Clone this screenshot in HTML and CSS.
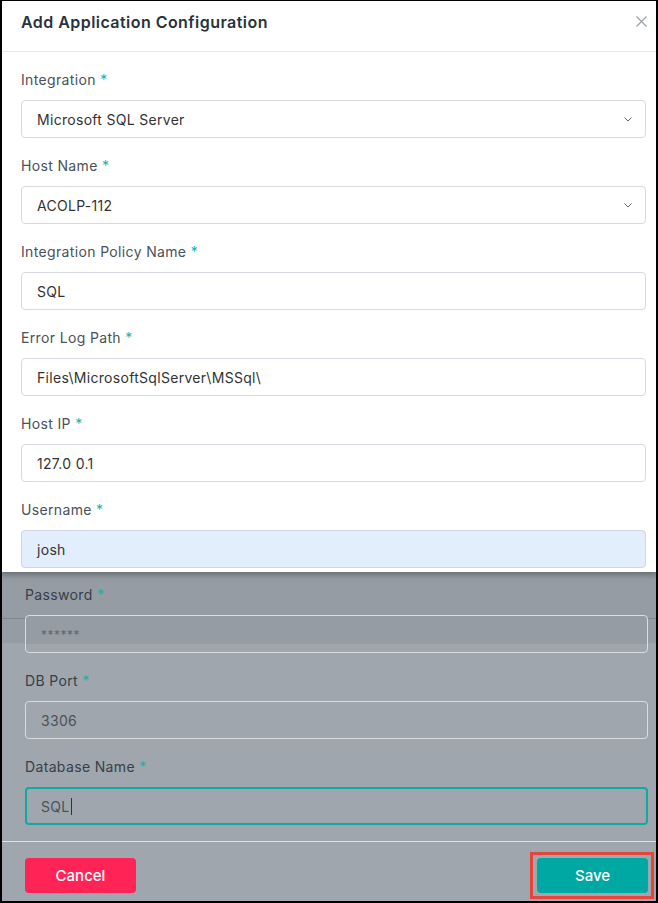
FILE: index.html
```html
<!DOCTYPE html>
<html lang="en">
<head>
  <meta charset="UTF-8">
  <meta name="viewport" content="width=device-width, initial-scale=1">
  <title>Add Application Configuration</title>
  <link rel="stylesheet" href="styles.css">
</head>
<body>

  <div class="frame">

    <section class="modal">
      <header class="modal-head">
        <h2>Add Application Configuration</h2>
        <button class="close" aria-label="Close">
          <svg width="11" height="11" viewBox="0 0 11 11"><path d="M0.5 0.5 L10.5 10.5 M10.5 0.5 L0.5 10.5" stroke="#9aa0a8" stroke-width="1.2" fill="none"/></svg>
        </button>
      </header>

      <div class="modal-body">
        <div class="field">
          <label>Integration <span class="req">*</span></label>
          <div class="control">
            <span>Microsoft SQL Server</span>
            <svg class="chev" width="8" height="5" viewBox="0 0 8 5"><path d="M0.5 0.5 L4 4 L7.5 0.5" stroke="#666" stroke-width="1" fill="none"/></svg>
          </div>
        </div>

        <div class="field">
          <label>Host Name <span class="req">*</span></label>
          <div class="control">
            <span>ACOLP-112</span>
            <svg class="chev" width="8" height="5" viewBox="0 0 8 5"><path d="M0.5 0.5 L4 4 L7.5 0.5" stroke="#666" stroke-width="1" fill="none"/></svg>
          </div>
        </div>

        <div class="field">
          <label>Integration Policy Name <span class="req">*</span></label>
          <div class="control"><span>SQL</span></div>
        </div>

        <div class="field">
          <label>Error Log Path <span class="req">*</span></label>
          <div class="control"><span>Files\MicrosoftSqlServer\MSSql\</span></div>
        </div>

        <div class="field">
          <label>Host IP <span class="req">*</span></label>
          <div class="control"><span>127.0 0.1</span></div>
        </div>

        <div class="field">
          <label>Username <span class="req">*</span></label>
          <div class="control autofill"><span>josh</span></div>
        </div>
      </div>
    </section>

    <section class="backdrop">
      <div class="backdrop-body">
        <div class="field">
          <label>Password <span class="req">*</span></label>
          <div class="control secret"><span>******</span></div>
        </div>

        <div class="field">
          <label>DB Port <span class="req">*</span></label>
          <div class="control"><span>3306</span></div>
        </div>

        <div class="field">
          <label>Database Name <span class="req">*</span></label>
          <div class="control focused"><span>SQL</span><i class="caret"></i></div>
        </div>
      </div>

      <footer class="foot">
        <button class="btn btn-cancel">Cancel</button>
        <span class="mark">
          <button class="btn btn-save">Save</button>
        </span>
      </footer>
    </section>

  </div>

</body>
</html>
```

FILE: styles.css
```css
body {
  margin: 0;
  font-family: Inter, "Noto Sans", sans-serif;
  background: #000;
}

.frame {
  width: 658px;
  height: 903px;
  box-sizing: border-box;
  border: 2px solid #000;
  border-top-width: 1px;
  display: flex;
  flex-direction: column;
  background: #9fa6ad;
}

/* white part of the dialog */
.modal {
  background: #fff;
  box-shadow: 0 2px 6px rgba(0, 0, 0, 0.25);
  position: relative;
  z-index: 1;
}

.modal-head {
  height: 51px;
  box-sizing: border-box;
  border-bottom: 1px solid #e4e7eb;
  display: flex;
  justify-content: space-between;
  align-items: flex-start;
  padding: 11px 5px 0 19px;
}

.modal-head h2 {
  margin: 0;
  font-size: 16px;
  line-height: 20px;
  font-weight: 600;
  letter-spacing: 0.45px;
  color: #29323d;
}

.close {
  border: 0;
  background: none;
  padding: 4px;
  line-height: 0;
  cursor: pointer;
}

.modal-body {
  padding: 18px 10px 4px 19px;
}

.field + .field {
  margin-top: 18px;
}

.field label {
  display: block;
  font-size: 14px;
  line-height: 20px;
  margin-bottom: 10px;
  letter-spacing: 0.35px;
  color: #49515b;
}

.req {
  color: #1ab0ab;
}

.control {
  height: 38px;
  box-sizing: border-box;
  border: 1px solid #d6dae0;
  border-radius: 4px;
  padding: 0 12px 0 15px;
  display: flex;
  align-items: center;
  justify-content: space-between;
  font-size: 14px;
  letter-spacing: 0.3px;
  color: #333;
}

.control.autofill {
  background: #e3eefc;
  border-color: #cdd6e2;
}

.chev {
  margin-right: 1px;
}

/* grey (overlayed) part */
.backdrop {
  flex: 1;
  display: flex;
  flex-direction: column;
  background: linear-gradient(to bottom, #868d95 0, #959ca3 8px, #959ca3 46px, #7f868e 46px, #7f868e 47px, #959ca3 47px, #959ca3 71px, #9fa6ad 71px);
}

.backdrop-body {
  padding: 13px 8px 16px 23px;
}

.backdrop .field label {
  color: #37404a;
}

.backdrop .control {
  border-color: #d8dde2;
  color: #4a525b;
  justify-content: flex-start;
}

.control.secret {
  background: linear-gradient(to bottom, #959ca3 28px, #9fa6ad 28px);
  font-size: 12px;
  color: #5f6770;
  letter-spacing: 0.5px;
}

.control.focused {
  border: 2px solid #12a8a3;
  padding-left: 14px;
}

.caret {
  display: inline-block;
  width: 1px;
  height: 17px;
  margin-left: 1px;
  background: #333;
}

.foot {
  border-top: 1px solid #dfe3e7;
  padding: 16px 8px 0 23px;
  display: flex;
  justify-content: space-between;
  align-items: flex-start;
}

.btn {
  width: 111px;
  height: 35px;
  border: 0;
  border-radius: 4px;
  font-family: Inter, "Noto Sans", sans-serif;
  font-size: 15px;
  font-weight: 500;
  color: #fff;
  cursor: pointer;
}

.btn-cancel {
  background: #ff2455;
}

.btn-save {
  background: #00a8a4;
  display: block;
}

/* red highlight frame drawn round the save button */
.mark {
  border: 3px solid #e6453c;
  padding: 3px 3px 3px 4px;
  margin: -6px -6px -6px 0;
}
```
